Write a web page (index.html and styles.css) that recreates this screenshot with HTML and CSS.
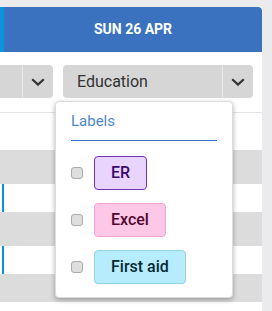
FILE: index.html
```html
<!DOCTYPE html>
<html lang="en">
<head>
    <meta charset="UTF-8">
    <title>Schedule</title>
    <link rel="stylesheet" href="styles.css">
</head>
<body>
    <div class="panel">
        <div class="day-head">SUN 26 APR</div>

        <div class="filters">
            <div class="select">
                <span class="select-text"></span>
                <span class="select-arrow">
                    <svg width="14" height="8" viewBox="0 0 14 8"><polyline points="1.2,1.2 7,6.6 12.8,1.2" fill="none" stroke="#333" stroke-width="2.2"/></svg>
                </span>
            </div>
            <div class="select">
                <span class="select-text">Education</span>
                <span class="select-arrow">
                    <svg width="14" height="8" viewBox="0 0 14 8"><polyline points="1.2,1.2 7,6.6 12.8,1.2" fill="none" stroke="#333" stroke-width="2.2"/></svg>
                </span>
            </div>
        </div>

        <div class="rows">
            <div class="row row-top"></div>
            <div class="row row-grey"></div>
            <div class="row row-short"><i class="mark"></i></div>
            <div class="row row-grey"></div>
            <div class="row row-short"><i class="mark"></i></div>
            <div class="row row-grey row-short"></div>
            <div class="row row-short"></div>
        </div>

        <div class="menu">
            <div class="menu-title">Labels</div>
            <ul class="menu-list">
                <li><span class="check"></span><span class="chip chip-er">ER</span></li>
                <li><span class="check"></span><span class="chip chip-excel">Excel</span></li>
                <li><span class="check"></span><span class="chip chip-aid">First aid</span></li>
            </ul>
        </div>
    </div>
</body>
</html>
```

FILE: styles.css
```css
*{
    margin: 0;
    padding: 0;
    box-sizing: border-box;
}
body{
    background: #ebebed;
    font-family: Roboto, "Liberation Sans", sans-serif;
    height: 311px;
    overflow: hidden;
}
.panel{
    width: 262px;
    margin-top: 7px;
    background: white;
    position: relative;
    height: 304px;
    overflow: hidden;
}
.day-head{
    height: 45px;
    line-height: 45px;
    background: #3b72c0;
    border-left: 4px solid #0a94dc;
    border-top-right-radius: 4px;
    color: white;
    font-size: 14px;
    font-weight: 700;
    text-align: center;
}
.filters{
    display: flex;
    justify-content: flex-end;
    gap: 10px;
    padding: 13px 9px 14px 0;
    border-bottom: 1px solid #e3e3e3;
    overflow: hidden;
}
.select{
    flex: 0 0 190px;
    height: 33px;
    display: flex;
    background: #d6d6d6;
    border-radius: 4px;
}
.select-text{
    flex: 1;
    padding-left: 14px;
    line-height: 33px;
    font-size: 16px;
    color: #333;
    border-right: 1px solid #e9e9e9;
}
.select-arrow{
    width: 30px;
    display: flex;
    align-items: center;
    justify-content: center;
}
.row{
    height: 34px;
    display: flex;
}
.row-top{
    height: 37px;
}
.row-grey{
    background: #dcdcdc;
}
.row-short{
    height: 28px;
}
.mark{
    width: 2px;
    margin-left: 2px;
    background: #0a94dc;
}
.menu{
    position: absolute;
    left: 55px;
    top: 94px;
    width: 178px;
    background: white;
    border: 1px solid #dcdcdc;
    border-radius: 4px;
    box-shadow: 0 2px 5px rgba(0, 0, 0, 0.3);
    padding: 0 15px 13px;
}
.menu-title{
    font-size: 15px;
    line-height: 18px;
    color: #4f86cf;
    padding: 10px 0 10px;
    border-bottom: 1px solid #3b72c0;
}
.menu-list{
    list-style: none;
    padding-top: 15px;
    display: flex;
    flex-direction: column;
    gap: 13px;
}
.menu-list>li{
    display: flex;
    align-items: center;
    gap: 11px;
}
.check{
    width: 12px;
    height: 12px;
    background: #dedede;
    border: 1px solid #ababab;
    border-radius: 3px;
}
.chip{
    height: 34px;
    line-height: 32px;
    padding: 0 16px;
    border: 1px solid;
    border-radius: 4px;
    font-size: 16px;
    font-weight: 500;
}
.chip-er{
    background: #e8d4fd;
    border-color: #6f35b5;
    color: #3b0a6b;
}
.chip-excel{
    background: #fdc8e8;
    border-color: #f4a4d4;
    color: #50072f;
}
.chip-aid{
    background: #b6ecfb;
    border-color: #94d2e4;
    color: #062a33;
}
```
